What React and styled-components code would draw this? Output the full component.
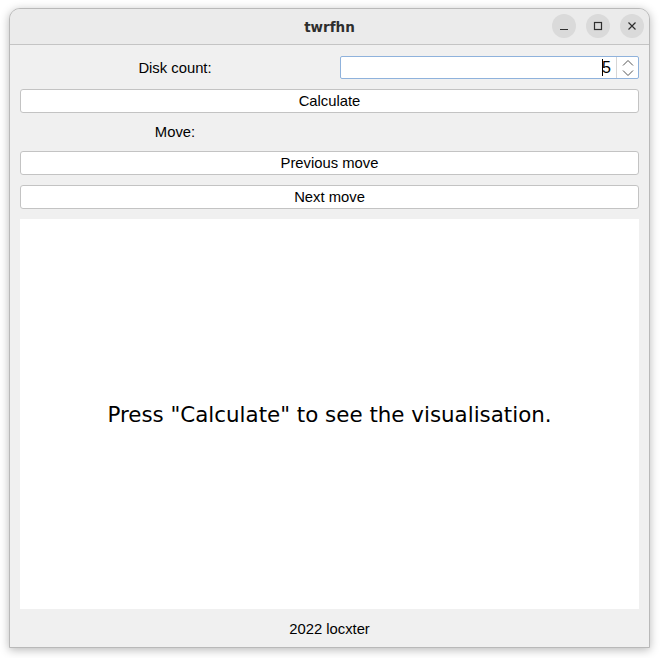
import React from 'react';
import styled, { createGlobalStyle } from 'styled-components';

const Global = createGlobalStyle`
  html, body {
    margin: 0;
    padding: 0;
    background: #ffffff;
  }
  body {
    font-family: "Liberation Sans", Arial, sans-serif;
  }
`;

const Page = styled.div`
  width: 660px;
  height: 658px;
  padding: 8px 0 0 9px;
  box-sizing: border-box;
`;

const Window = styled.div`
  width: 641px;
  height: 640px;
  display: flex;
  flex-direction: column;
  border-radius: 11px 11px 0 0;
  border: 1px solid #b9b9b9;
  box-sizing: border-box;
  background: #f0f0f0;
  box-shadow: 0 2px 10px rgba(0, 0, 0, 0.28);
  overflow: hidden;
`;

const TitleBar = styled.div`
  height: 35px;
  flex-shrink: 0;
  background: #ebebeb;
  border-bottom: 1px solid #c4c4c4;
  display: flex;
  align-items: center;
  justify-content: center;
  position: relative;
`;

const Title = styled.div`
  font-family: "DejaVu Sans", sans-serif;
  font-weight: bold;
  font-size: 13.5px;
  color: #2e2e2e;
`;

const Controls = styled.div`
  position: absolute;
  right: 5px;
  top: 5px;
  display: flex;
  gap: 10px;
`;

const CtrlButton = styled.div`
  width: 24px;
  height: 24px;
  border-radius: 50%;
  background: #dadada;
  display: flex;
  align-items: center;
  justify-content: center;
`;

const Body = styled.div`
  flex: 1;
  display: flex;
  flex-direction: column;
  padding: 11px 10px 0 10px;
  gap: 10px;
  font-size: 14.8px;
  color: #000;
`;

const FormRow = styled.div`
  display: grid;
  grid-template-columns: 310px 1fr;
  column-gap: 10px;
  align-items: center;
  height: ${({ h }) => h}px;
`;

const Label = styled.div`
  text-align: center;
`;

const SpinBox = styled.div`
  height: 23px;
  box-sizing: border-box;
  border: 1px solid #8fb2dc;
  border-radius: 2px;
  background: #fff;
  display: flex;
  align-items: stretch;
`;

const SpinValue = styled.div`
  flex: 1;
  display: flex;
  align-items: center;
  justify-content: flex-end;
  padding-right: 5px;
  font-size: 16px;
`;

const Caret = styled.span`
  display: inline-block;
  width: 1px;
  height: 17px;
  background: #000;
  margin-right: -1px;
`;

const SpinArrows = styled.div`
  width: 21px;
  border-left: 1px solid #d6d6d6;
  display: flex;
  align-items: center;
  justify-content: center;
`;

const Button = styled.button`
  height: 24px;
  width: 100%;
  box-sizing: border-box;
  border: 1px solid #c3c3c3;
  border-radius: 3px;
  background: #ffffff;
  font-family: "Liberation Sans", Arial, sans-serif;
  font-size: 14.8px;
  color: #000;
  padding: 0;
`;

const Canvas = styled.div`
  flex: 1;
  background: #ffffff;
  display: flex;
  align-items: center;
  justify-content: center;
`;

const CanvasText = styled.div`
  font-family: "DejaVu Sans", sans-serif;
  font-size: 21.4px;
  color: #000;
`;

const Footer = styled.div`
  height: 37px;
  flex-shrink: 0;
  display: flex;
  align-items: center;
  justify-content: center;
  margin-top: -10px;
  padding-top: 1px;
`;

export default function App() {
  return (
    <Page>
      <Global />
      <Window>
        <TitleBar>
          <Title>twrfhn</Title>
          <Controls>
            <CtrlButton>
              <svg width="10" height="10" viewBox="0 0 10 10">
                <path d="M1 8.5h8" stroke="#2e2e2e" strokeWidth="1.2" />
              </svg>
            </CtrlButton>
            <CtrlButton>
              <svg width="10" height="10" viewBox="0 0 10 10">
                <rect x="1.5" y="1.5" width="7" height="7" fill="none" stroke="#2e2e2e" strokeWidth="1.2" />
              </svg>
            </CtrlButton>
            <CtrlButton>
              <svg width="10" height="10" viewBox="0 0 10 10">
                <path d="M1.5 1.5l7 7M8.5 1.5l-7 7" stroke="#2e2e2e" strokeWidth="1.2" />
              </svg>
            </CtrlButton>
          </Controls>
        </TitleBar>
        <Body>
          <FormRow h={23}>
            <Label>Disk count:</Label>
            <SpinBox>
              <SpinValue>
                <Caret />5
              </SpinValue>
              <SpinArrows>
                <svg width="12" height="18" viewBox="0 0 12 18">
                  <path d="M1 6.5l5-5 5 5M1 11.5l5 5 5-5" fill="none" stroke="#555" strokeWidth="1" />
                </svg>
              </SpinArrows>
            </SpinBox>
          </FormRow>
          <Button>Calculate</Button>
          <FormRow h={18}>
            <Label>Move:</Label>
            <div />
          </FormRow>
          <Button>Previous move</Button>
          <Button>Next move</Button>
          <Canvas>
            <CanvasText>Press "Calculate" to see the visualisation.</CanvasText>
          </Canvas>
          <Footer>2022 locxter</Footer>
        </Body>
      </Window>
    </Page>
  );
}
